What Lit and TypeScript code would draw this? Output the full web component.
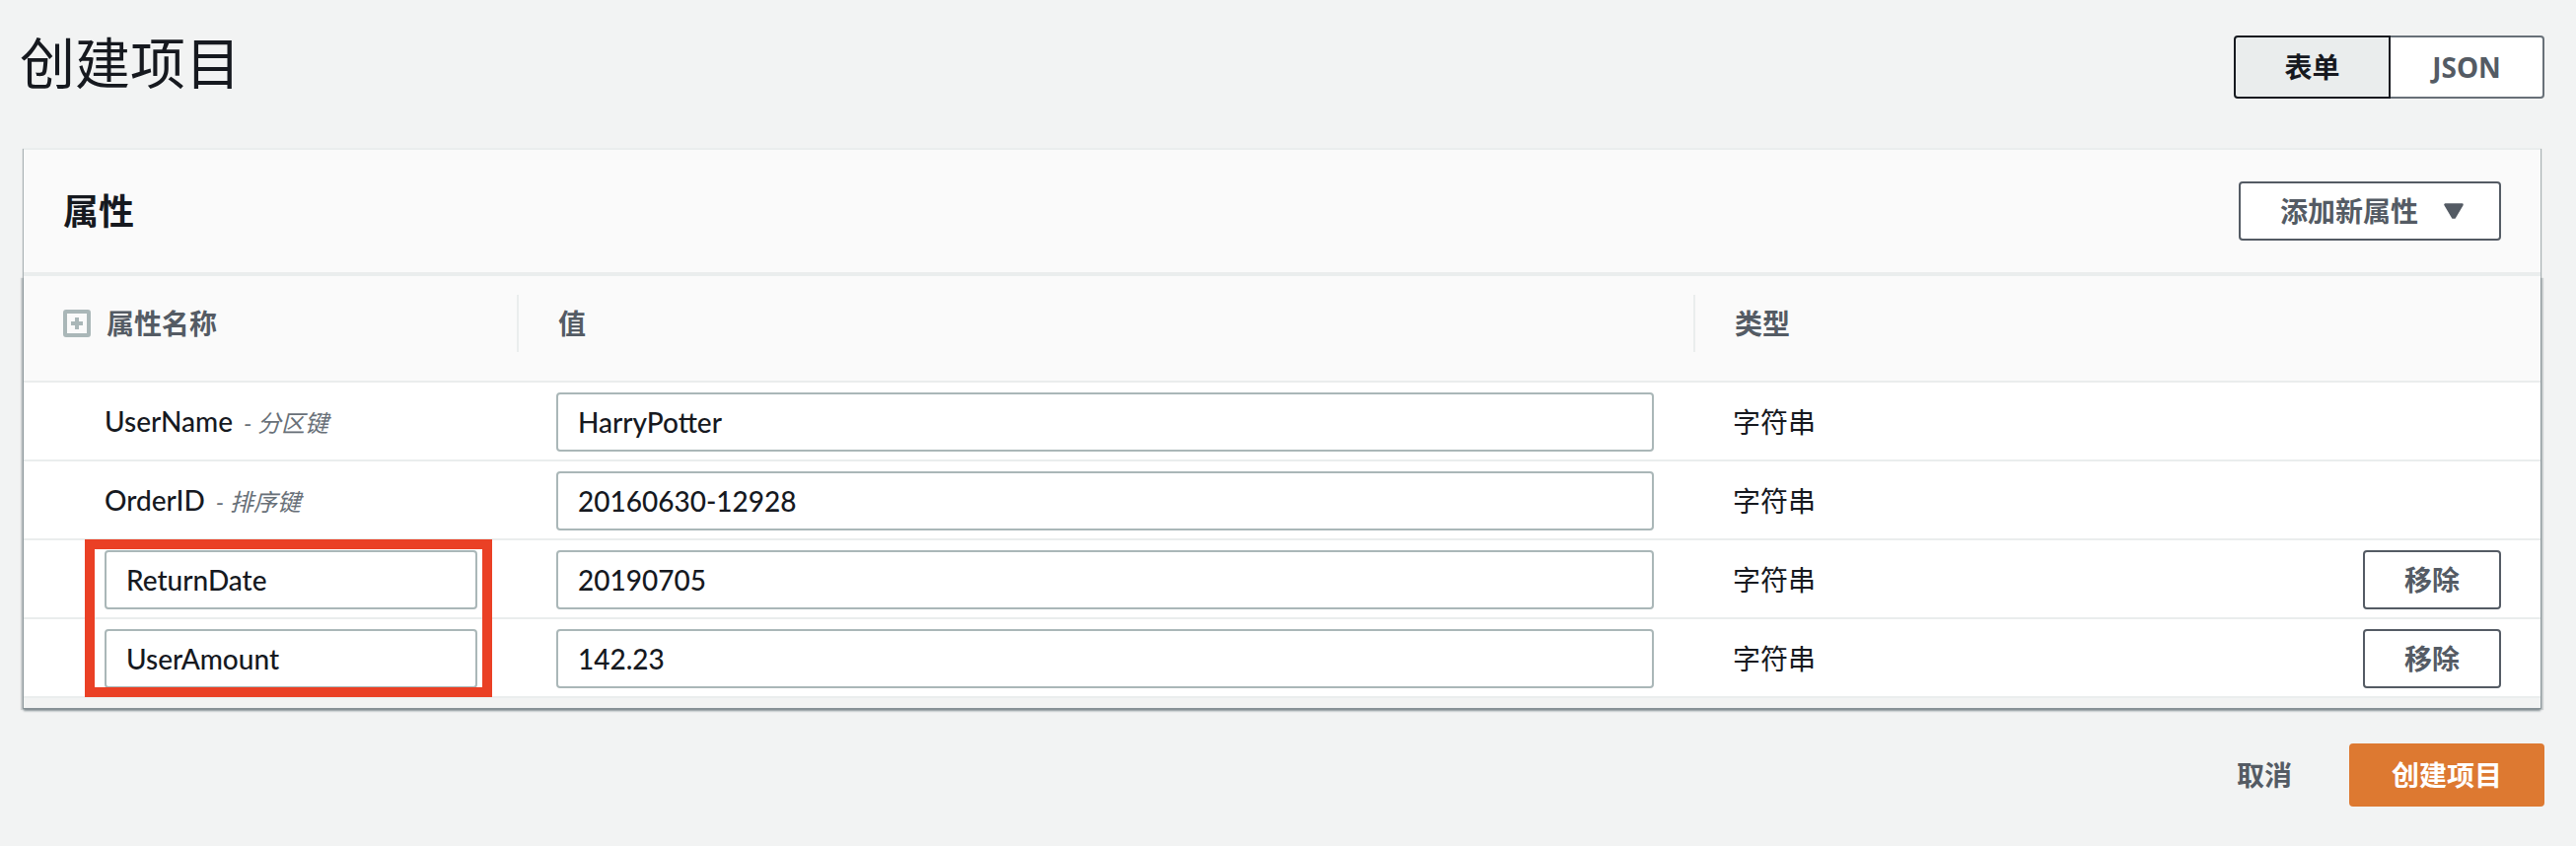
import { LitElement, html, css, nothing } from "lit";
import { customElement, state } from "lit/decorators.js";

interface Attribute {
  name: string;
  keyLabel?: string;
  value: string;
  type: string;
  marked?: boolean;
}

@customElement("app-root")
export class AppRoot extends LitElement {
  static styles = css`
    :host {
      display: block;
      box-sizing: border-box;
      min-height: 100vh;
      padding: 16px 32px 40px 20px;
      background: #f2f3f3;
      color: #16191f;
      font-family: Lato, "Noto Sans CJK SC", sans-serif;
      font-size: 28px;
      font-weight: 500;
      line-height: 40px;
    }
    * {
      box-sizing: border-box;
    }
    h1,
    h2 {
      margin: 0;
    }
    .page-head {
      display: flex;
      justify-content: space-between;
      align-items: flex-start;
      height: 134px;
    }
    h1 {
      font-size: 56px;
      line-height: 96px;
      font-weight: 400;
    }
    button {
      font: inherit;
      font-family: "Noto Sans", "Noto Sans CJK SC", sans-serif;
      font-weight: 700;
      color: #545b64;
      background: #fff;
      border: 2px solid #545b64;
      border-radius: 4px;
      height: 60px;
      padding: 0 40px;
      display: inline-flex;
      align-items: center;
      justify-content: center;
      white-space: nowrap;
      cursor: pointer;
    }
    .toggle {
      display: flex;
      padding-top: 20px;
    }
    .toggle button {
      width: 156px;
      height: 64px;
      border-color: #687078;
      border-left: 0;
      border-radius: 0 4px 4px 0;
    }
    .toggle button.active {
      width: 159px;
      background: #eaeded;
      color: #16191f;
      border: 2px solid #16191f;
      border-radius: 4px 0 0 4px;
    }
    .panel {
      margin: 0 4px;
      border-top: 2px solid #eaeded;
      box-shadow:
        1px 1px 1px rgba(0, 28, 36, 0.3),
        -1px 1px 1px rgba(0, 28, 36, 0.3);
    }
    .panel-head {
      display: flex;
      justify-content: space-between;
      align-items: center;
      height: 128px;
      padding: 0 40px;
      background: #fafafa;
      border-bottom: 4px solid #eaeded;
    }
    .panel-body {
      padding-bottom: 10px;
      background: #f2f3f3;
      box-shadow:
        0 3px 2px #879196,
        3px 2px 1px rgba(0, 28, 36, 0.15),
        -3px 2px 1px rgba(0, 28, 36, 0.15);
    }
    h2 {
      font-size: 36px;
      line-height: 44px;
      font-weight: 700;
    }
    .add {
      gap: 26px;
      padding: 0 36px 0 40px;
    }
    .caret {
      width: 20px;
      height: 16px;
    }
    table {
      width: 100%;
      table-layout: fixed;
      border-collapse: separate;
      border-spacing: 0;
    }
    .col-name {
      width: 502px;
    }
    .col-type {
      width: 676px;
    }
    .col-action {
      width: 181px;
    }
    th {
      padding: 19px 0 29px;
      background: #fafafa;
      border-bottom: 2px solid #eaeded;
      color: #545b64;
      font-weight: 700;
      text-align: left;
    }
    .th-inner {
      display: flex;
      align-items: center;
      gap: 16px;
      height: 58px;
      padding-left: 40px;
    }
    .divided {
      border-right: 2px solid #eaeded;
    }
    .plus {
      width: 28px;
      height: 28px;
    }
    td {
      height: 80px;
      padding: 10px 40px 8px 38px;
      background: #fff;
      border-bottom: 2px solid #eaeded;
      white-space: nowrap;
    }
    td.name {
      position: relative;
      padding-left: 82px;
      padding-right: 42px;
    }
    td.value {
      padding-right: 42px;
    }
    td.type {
      font-weight: 400;
    }
    td.action {
      text-align: right;
      padding-left: 0;
    }
    .action button {
      vertical-align: middle;
    }
    .key {
      margin-left: 4px;
      font-size: 24px;
      font-style: italic;
      font-weight: 400;
      color: #687078;
    }
    input {
      display: block;
      width: 100%;
      height: 60px;
      margin: 0;
      padding: 0 20px;
      font: inherit;
      color: inherit;
      background: #fff;
      border: 2px solid #aab7b8;
      border-radius: 4px;
    }
    .marker {
      position: absolute;
      z-index: 1;
      top: -1px;
      left: 62px;
      width: 413px;
      height: 160px;
      border: 10px solid #ea4025;
      pointer-events: none;
    }
    .actions {
      display: flex;
      justify-content: flex-end;
      gap: 16px;
      padding-top: 36px;
    }
    .actions button {
      height: 64px;
    }
    .actions .link {
      background: transparent;
      border-color: transparent;
    }
    .actions .primary {
      width: 198px;
      color: #fff;
      background: #dd7931;
      border-color: #dd7931;
    }
  `;

  @state() private attributes: Attribute[] = [
    { name: "UserName", keyLabel: "分区键", value: "HarryPotter", type: "字符串" },
    { name: "OrderID", keyLabel: "排序键", value: "20160630-12928", type: "字符串" },
    { name: "ReturnDate", value: "20190705", type: "字符串", marked: true },
    { name: "UserAmount", value: "142.23", type: "字符串" },
  ];

  private remove(item: Attribute) {
    this.attributes = this.attributes.filter((a) => a !== item);
  }

  private renderRow(item: Attribute) {
    return html`
      <tr>
        <td class="name">
          ${item.keyLabel
            ? html`${item.name} <span class="key">- ${item.keyLabel}</span>`
            : html`<input type="text" aria-label="属性名称" .value=${item.name} />`}
          ${item.marked ? html`<div class="marker"></div>` : nothing}
        </td>
        <td class="value">
          <input type="text" aria-label=${item.name} .value=${item.value} />
        </td>
        <td class="type">${item.type}</td>
        <td class="action">
          ${item.keyLabel
            ? nothing
            : html`<button type="button" @click=${() => this.remove(item)}>移除</button>`}
        </td>
      </tr>
    `;
  }

  render() {
    return html`
      <header class="page-head">
        <h1>创建项目</h1>
        <div class="toggle">
          <button type="button" class="active" aria-pressed="true">表单</button>
          <button type="button" aria-pressed="false">JSON</button>
        </div>
      </header>
      <section class="panel">
        <div class="panel-head">
          <h2>属性</h2>
          <button type="button" class="add">
            添加新属性
            <svg class="caret" viewBox="0 0 20 16" aria-hidden="true">
              <path d="M1.5 1.5H18.5L10.8 14.5H9.2Z" fill="#545b64" stroke="#545b64" stroke-width="2.5" stroke-linejoin="round" />
            </svg>
          </button>
        </div>
        <div class="panel-body">
          <table>
            <colgroup>
              <col class="col-name" />
              <col />
              <col class="col-type" />
              <col class="col-action" />
            </colgroup>
            <thead>
              <tr>
                <th scope="col">
                  <div class="th-inner divided">
                    <svg class="plus" viewBox="0 0 28 28" aria-hidden="true">
                      <rect x="2" y="2" width="24" height="24" rx="1" fill="none" stroke="#aab7b8" stroke-width="4" />
                      <path d="M14 8V20M8 14H20" stroke="#aab7b8" stroke-width="4" />
                    </svg>
                    属性名称
                  </div>
                </th>
                <th scope="col"><div class="th-inner divided">值</div></th>
                <th scope="col"><div class="th-inner">类型</div></th>
                <th><div class="th-inner"></div></th>
              </tr>
            </thead>
            <tbody>
              ${this.attributes.map((item) => this.renderRow(item))}
            </tbody>
          </table>
        </div>
      </section>
      <footer class="actions">
        <button type="button" class="link">取消</button>
        <button type="button" class="primary">创建项目</button>
      </footer>
    `;
  }
}
